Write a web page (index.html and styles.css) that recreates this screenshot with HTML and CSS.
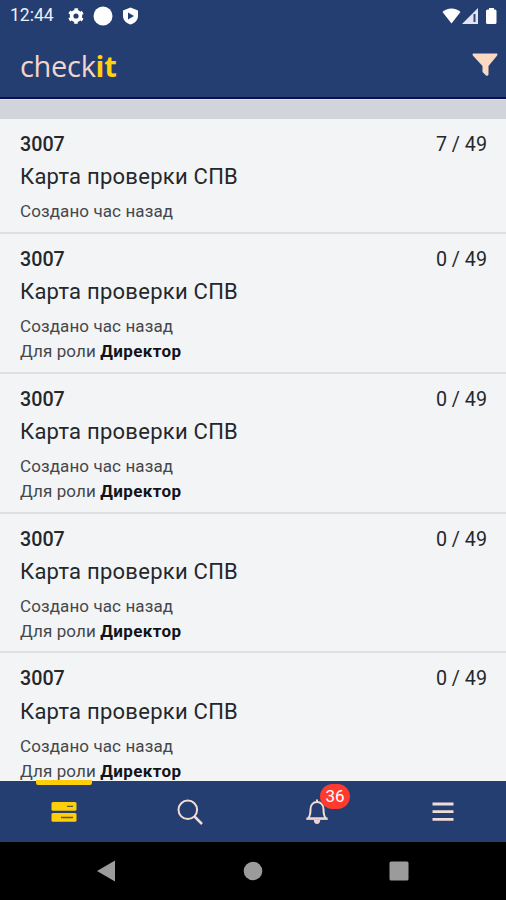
FILE: index.html
```html
<!DOCTYPE html>
<html lang="ru">
<head>
<meta charset="utf-8">
<title>checkit</title>
<link rel="stylesheet" href="styles.css">
</head>
<body>
<div class="app">
  <div class="status">
    <span class="clock">12:44</span>
    <svg class="status-left" width="72" height="20" viewBox="0 0 72 20">
      <g fill="none" stroke="#fff">
        <circle cx="9" cy="10" r="4.4" stroke-width="3.600"/>
        <circle cx="9" cy="10" r="6.600" stroke-width="2.400" stroke-dasharray="3.455 3.455" stroke-dashoffset="1.727" transform="rotate(30 9 10)"/>
      </g>
      <circle cx="36" cy="10" r="9.500" fill="#fff"/>
      <path d="M63.500 1.500L71 4.500V10C71 14 67.500 17.500 63.500 18.500C59.500 17.500 56 14 56 10V4.500Z" fill="#fff"/>
      <path d="M61 6.500L67 10L61 13.500Z" fill="#243e72"/>
    </svg>
    <svg class="status-right" width="56" height="20" viewBox="0 0 56 20">
      <path d="M0.500 6C5 1.300 14 1.300 18.500 6L9.500 17.500Z" fill="#fff"/>
      <path d="M20 18L36 2V18Z" fill="#e4e5f3"/>
      <path d="M32.500 8V16" stroke="#34467c" stroke-width="2"/>
      <path d="M44 5Q44 3.500 45.500 3.500H47V2H52V3.500H53Q54.500 3.500 54.500 5V16.500Q54.500 18 53 18H45.500Q44 18 44 16.500Z" fill="#fff"/>
    </svg>
  </div>
  <header class="header">
    <div class="logo">check<b>it</b></div>
    <svg width="26" height="24" viewBox="0 0 26 24"><path d="M1 0.500H25Q26 1.500 25 2.800L16.500 13V21.500Q16 23.500 14 22.500L10.500 19V13L1 2.800Q0 1.500 1 0.500Z" fill="#fad9c2"/></svg>
  </header>
  <div class="strip"></div>
  <main class="list">
    <article class="card">
      <div class="top"><span class="num">3007</span><span class="count">7 / 49</span></div>
      <div class="title">Карта проверки СПВ</div>
      <div class="meta made">Создано час назад</div>
    </article>
    <article class="card">
      <div class="top"><span class="num">3007</span><span class="count">0 / 49</span></div>
      <div class="title">Карта проверки СПВ</div>
      <div class="meta made">Создано час назад</div>
      <div class="meta">Для роли <b>Директор</b></div>
    </article>
    <article class="card">
      <div class="top"><span class="num">3007</span><span class="count">0 / 49</span></div>
      <div class="title">Карта проверки СПВ</div>
      <div class="meta made">Создано час назад</div>
      <div class="meta">Для роли <b>Директор</b></div>
    </article>
    <article class="card">
      <div class="top"><span class="num">3007</span><span class="count">0 / 49</span></div>
      <div class="title">Карта проверки СПВ</div>
      <div class="meta made">Создано час назад</div>
      <div class="meta">Для роли <b>Директор</b></div>
    </article>
    <article class="card">
      <div class="top"><span class="num">3007</span><span class="count">0 / 49</span></div>
      <div class="title">Карта проверки СПВ</div>
      <div class="meta made">Создано час назад</div>
      <div class="meta">Для роли <b>Директор</b></div>
    </article>
  </main>
  <nav class="tabs">
    <div class="tab active">
      <svg width="26" height="20" viewBox="0 0 26 20">
        <rect x="0.500" y="0" width="25" height="8.800" rx="1.500" fill="#ffce0a"/>
        <rect x="0.500" y="11" width="25" height="8.800" rx="1.500" fill="#ffce0a"/>
        <path d="M16 4.400H22M10 15.500H22" stroke="#5c5538" stroke-width="1.300"/>
      </svg>
    </div>
    <div class="tab">
      <svg width="26" height="26" viewBox="0 0 26 26" fill="none" stroke="#f4dcd2"><circle cx="10.800" cy="10.800" r="9.300" stroke-width="2"/><path d="M17.500 17.500L25 25" stroke-width="2.500"/></svg>
    </div>
    <div class="tab">
      <svg width="22" height="26" viewBox="0 0 22 26"><path d="M11 0.500V3M2 19.500C4.300 17 4.500 14 4.500 10.500C4.500 6 7 3 11 3S17.500 6 17.500 10.500C17.500 14 17.700 17 20 19.500Z" fill="none" stroke="#f4dcd2" stroke-width="2"/><path d="M0.500 18.500H21.500V20.800H0.500ZM7.800 21H14.200Q14 25 11 25Q8 25 7.800 21Z" fill="#eed2cf"/></svg>
      <span class="badge">36</span>
    </div>
    <div class="tab">
      <svg width="22" height="20" viewBox="0 0 22 20"><path d="M0.500 2H21.500M0.500 9.700H21.500M0.500 17.400H21.500" stroke="#f0dcd7" stroke-width="2.800"/></svg>
    </div>
  </nav>
  <div class="system">
    <svg width="18" height="22" viewBox="0 0 18 22"><path d="M0 11L18 0.500V21.500Z" fill="#9b9b9b"/></svg>
    <svg width="20" height="20" viewBox="0 0 20 20"><circle cx="10" cy="10" r="9.300" fill="#9b9b9b"/></svg>
    <svg width="20" height="20" viewBox="0 0 20 20"><rect x="0.500" y="0.500" width="19" height="19" rx="1.500" fill="#9b9b9b"/></svg>
  </div>
</div>
</body>
</html>
```
FILE: styles.css
```css
* { box-sizing: border-box; }
body { margin: 0; font-family: Roboto, sans-serif; color: #25272b; }
svg { display: block; flex: none; }
.app { width: 506px; height: 900px; display: flex; flex-direction: column; overflow: hidden; background: #f3f4f6; }
.status { flex: none; height: 31px; display: flex; align-items: center; padding: 0 8px 0 10px; background: #243e72; }
.clock { width: 57px; color: #eef0f8; font-size: 17.5px; line-height: 33px; }
.status-right { margin-left: auto; }
.header { flex: none; height: 68px; display: flex; justify-content: space-between; align-items: center; padding: 2px 8px 0 20px; background: #243e72; border-bottom: 2px solid #0d0e57; }
.logo { padding-top: 2px; color: #f1d5cb; font-family: "Open Sans", sans-serif; font-size: 29px; line-height: 40px; letter-spacing: -0.300px; }
.logo b { color: #ffd20e; }
.strip { flex: none; height: 19.500px; background: #d1d4da; border-top: 1px solid #e3e0f5; }
.list { flex: 1; min-height: 0; overflow: hidden; }
.card { padding: 13.200px 19px 7.400px 20px; border-bottom: 2px solid #dddfe1; }
.card:first-child { padding-bottom: 8.100px; }
.top { display: flex; justify-content: space-between; height: 26px; line-height: 26px; font-size: 19.700px; }
.num { font-weight: 500; }
.title { margin-top: 3.200px; height: 32px; line-height: 32px; font-size: 22px; letter-spacing: 0.260px; }
.meta { height: 25px; line-height: 25px; font-size: 17px; letter-spacing: 0.100px; color: #45474b; }
.meta b { color: #131416; letter-spacing: 0.400px; }
.made { margin-top: 6px; }
.tabs { flex: none; height: 61px; display: grid; grid-template-columns: repeat(4, 1fr); background: #243e72; }
.tab { position: relative; display: flex; justify-content: center; align-items: center; padding-left: 1px; }
.active::before { content: ""; position: absolute; top: -1px; left: 36px; width: 56px; height: 5px; background: #ffce0a; border-radius: 0 0 2px 2px; }
.badge { position: absolute; left: 67px; top: 3px; width: 30px; height: 25px; border-radius: 13px; background: #ff3b30; color: #fff; font-size: 17px; line-height: 25px; text-align: center; }
.system { flex: none; height: 58px; display: flex; justify-content: space-between; align-items: center; padding: 0 97px; background: #000; }
.system svg:nth-child(2) { margin-left: 2px; }
```
